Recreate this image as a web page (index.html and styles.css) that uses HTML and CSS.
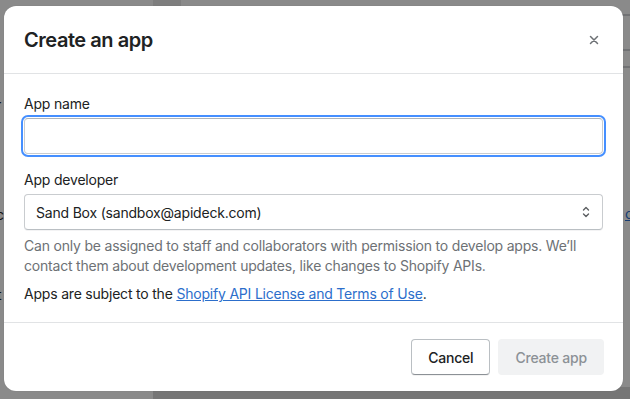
FILE: index.html
```html
<!DOCTYPE html>
<html lang="en">
<head>
<meta charset="utf-8">
<title>Create an app</title>
<link rel="stylesheet" href="styles.css">
</head>
<body>
<div class="page">
  <div class="page-sidebar"></div>
  <div class="page-gutter"></div>
  <div class="page-main">
    <div class="page-line l1"></div>
    <div class="page-line l2"></div>
    <div class="page-line l3"></div>
    <div class="page-bottom"></div>
  </div>
  <span class="bg-text t1">r</span>
  <span class="bg-text t2">c</span>
  <span class="bg-text t3">t</span>
  <span class="bg-text t4">c</span>
</div>
<div class="backdrop"></div>
<div class="modal" role="dialog" aria-labelledby="modal-title">
  <header class="modal-header">
    <h2 id="modal-title" class="modal-title">Create an app</h2>
    <button class="close" aria-label="Close">
      <svg width="20" height="20" viewBox="0 0 20 20"><path d="M6.5 6.5l7 7M13.5 6.5l-7 7" stroke="#6d7175" stroke-width="1.5" stroke-linecap="round"/></svg>
    </button>
  </header>
  <section class="modal-body">
    <div class="field">
      <label class="label" for="app-name">App name</label>
      <div class="input-wrap"><input id="app-name" class="input" type="text"></div>
    </div>
    <div class="field field-dev">
      <label class="label" for="dev">App developer</label>
      <div class="select">
        <span class="select-value">Sand Box (sandbox@apideck.com)</span>
        <svg class="select-arrows" width="20" height="20" viewBox="0 0 20 20"><path d="M7.5 8l2.5-2.5L12.5 8M7.5 12l2.5 2.5 2.5-2.5" fill="none" stroke="#5c5f62" stroke-width="1.4" stroke-linecap="round" stroke-linejoin="round"/></svg>
      </div>
      <p class="help">Can only be assigned to staff and collaborators with permission to develop apps. We’ll contact them about development updates, like changes to Shopify APIs.</p>
    </div>
    <p class="terms">Apps are subject to the <a href="#" class="link">Shopify API License and Terms of Use</a>.</p>
  </section>
  <footer class="modal-footer">
    <button class="btn">Cancel</button>
    <button class="btn btn-primary" disabled>Create app</button>
  </footer>
</div>
</body>
</html>
```
FILE: styles.css
```css
html, body {
  margin: 0;
  padding: 0;
  width: 630px;
  height: 399px;
  overflow: hidden;
  font-family: Inter, "Noto Sans", "Liberation Sans", sans-serif;
  letter-spacing: -0.2px;
  -webkit-font-smoothing: antialiased;
}

.page {
  position: absolute;
  inset: 0;
  display: flex;
  background: #f6f6f7;
}
.page-sidebar {
  width: 153px;
  background: #f6f6f7;
}
.page-gutter {
  width: 28px;
  background: #e0e0e0;
}
.page-main {
  flex: 1;
  background: #f6f6f7;
  position: relative;
}
.page-line {
  position: absolute;
  right: 0;
  width: 20px;
  height: 2px;
  background: #c9cccf;
}
.page-line.l1 { top: 14px; }
.page-line.l2 { top: 49px; }
.page-line.l3 { top: 66px; }
.page-bottom {
  position: absolute;
  left: -28px;
  right: 0;
  bottom: 0;
  height: 12px;
  background: #d2d2d2;
}

.bg-text {
  position: absolute;
  font-size: 14px;
  color: #202223;
}
.t1 { left: -4px; top: 96px; }
.t2 { left: -4px; top: 206px; }
.t3 { left: -3px; top: 286px; }
.t4 { left: 625px; top: 205px; color: #2c6ecb; text-decoration: underline; }

.backdrop {
  position: absolute;
  inset: 0;
  background: rgba(0, 0, 0, 0.44);
}

.modal {
  position: absolute;
  left: 4px;
  top: 6px;
  width: 619px;
  height: 385px;
  background: #ffffff;
  border-radius: 12px;
  display: flex;
  flex-direction: column;
  box-shadow: 0 0 1px rgba(0,0,0,0.2);
}

.modal-header {
  height: 68px;
  box-sizing: border-box;
  padding: 0 20px;
  display: flex;
  align-items: center;
  justify-content: space-between;
  border-bottom: 1px solid #e1e3e5;
}
.modal-title {
  margin: 0;
  font-size: 20px;
  line-height: 28px;
  font-weight: 600;
  color: #202223;
  letter-spacing: -0.45px;
}
.close {
  border: 0;
  background: none;
  padding: 0;
  width: 20px;
  height: 20px;
  margin-right: -1px;
  display: flex;
  align-items: center;
  justify-content: center;
  cursor: pointer;
}

.modal-body {
  padding: 20px 20px 0;
  flex: 1;
  border-bottom: 1px solid #e1e3e5;
}
.field { margin-bottom: 16px; }
.field-dev { margin-bottom: 8px; }
.label {
  display: block;
  font-size: 14px;
  line-height: 20px;
  color: #202223;
  margin-bottom: 4px;
}
.input-wrap {
  position: relative;
}
.input {
  display: block;
  width: 100%;
  box-sizing: border-box;
  height: 36px;
  margin: 0;
  border: 1px solid #c9cccf;
  border-top-color: #aeb4b9;
  border-radius: 4px;
  outline: 2px solid #458fff;
  outline-offset: 1px;
  font: inherit;
  letter-spacing: inherit;
  font-size: 14px;
  padding: 0 12px;
  background: #fff;
}

.select {
  height: 36px;
  box-sizing: border-box;
  border: 1px solid #c9cccf;
  border-bottom-color: #babfc3;
  border-radius: 4px;
  box-shadow: 0 1px 0 rgba(22, 29, 37, 0.05);
  display: flex;
  align-items: center;
  justify-content: space-between;
  padding: 0 6px 0 11px;
}
.select-value {
  font-size: 14px;
  color: #202223;
}
.help {
  margin: 6px 0 0;
  font-size: 14px;
  line-height: 20px;
  color: #6d7175;
}
.terms {
  margin: 0;
  font-size: 14px;
  line-height: 20px;
  color: #202223;
}
.link {
  color: #2c6ecb;
  text-decoration: underline;
}

.modal-footer {
  padding: 16px 19px 16px 20px;
  display: flex;
  justify-content: flex-end;
  gap: 8px;
}
.btn {
  height: 36px;
  box-sizing: border-box;
  padding: 0 16px;
  font: inherit;
  letter-spacing: inherit;
  font-size: 14px;
  font-weight: 500;
  color: #202223;
  background: #ffffff;
  border: 1px solid #babfc3;
  border-bottom-color: #8c9196;
  border-radius: 4px;
  box-shadow: 0 1px 0 rgba(0,0,0,0.05);
}
.btn-primary {
  background: #f1f2f3;
  border-color: transparent;
  color: #8c9196;
  box-shadow: none;
}
```
